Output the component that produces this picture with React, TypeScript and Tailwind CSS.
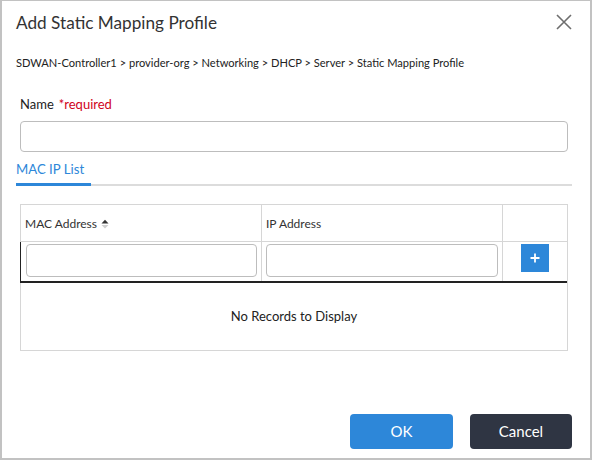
import { useState } from "react";

const FONT = "font-['Lato','Liberation_Sans',sans-serif]";

function SortIcon() {
  return (
    <svg width="8" height="10" viewBox="0 0 8 10" className="ml-[4px] inline-block">
      <path d="M0.5 4.5 L4 0.8 L7.5 4.5 Z" fill="#333" />
      <path d="M0.5 6 L4 9.5 L7.5 6 Z" fill="#cfcfcf" />
    </svg>
  );
}

function CloseIcon() {
  return (
    <svg width="16" height="16" viewBox="0 0 16 16">
      <path d="M1 1 L15 15 M15 1 L1 15" stroke="#6e6e6e" strokeWidth="1.6" fill="none" />
    </svg>
  );
}

export default function App() {
  const [name, setName] = useState("");
  const [mac, setMac] = useState("");
  const [ip, setIp] = useState("");

  return (
    <div
      className={`${FONT} w-[592px] h-[460px] bg-white border-x-2 border-b-2 border-t border-[#c2c2c2] flex flex-col text-[#333]`}
    >
      <div className="flex items-start justify-between pl-[14px] pr-[18px] pt-[12px]">
        <h2 className="text-[17.2px] leading-[20px] text-[#333]">Add Static Mapping Profile</h2>
        <button className="mt-[1px]">
          <CloseIcon />
        </button>
      </div>

      <div className="mt-[23px] pl-[14px] text-[11.1px] leading-[14px] text-[#222]">
        SDWAN-Controller1 &gt; provider-org &gt; Networking &gt; DHCP &gt; Server &gt; Static Mapping Profile
      </div>

      <div className="mt-[26px] pl-[18px] text-[13px] leading-[16px]">
        <span className="text-[#222]">Name</span>
        <span className="ml-[5px] text-[13px] text-[#d0021b]">*required</span>
      </div>
      <input
        value={name}
        onChange={(e) => setName(e.target.value)}
        className="mt-[9px] ml-[18px] w-[548px] h-[31px] rounded-[4px] border border-[#bdbdbd] px-2 text-[13px] outline-none"
      />

      <div className="mt-[9px] ml-[14px] w-[556px] flex border-b-2 border-[#dcdcdc]">
        <div className="mb-[-2px] w-[75px] pb-[6px] border-b-[3px] border-[#2d87d9] text-[13.2px] leading-[16px] text-[#2d87d9]">
          MAC IP List
        </div>
      </div>

      <div className="mt-[18px] ml-[18px] w-[548px] border border-[#d6d6d6]">
        <div className="grid grid-cols-[241px_241px_1fr] h-[37px] border-b border-[#d6d6d6] text-[12px] text-[#333]">
          <div className="flex items-center pt-[2px] pl-[4px] border-r border-[#d6d6d6]">
            MAC Address
            <SortIcon />
          </div>
          <div className="flex items-center pt-[2px] pl-[4px] border-r border-[#d6d6d6]">IP Address</div>
          <div />
        </div>
        <div className="grid grid-cols-[241px_241px_1fr] h-[41px] border-l border-b-2 border-l-[#222] border-b-[#222] -ml-px">
          <div className="pt-[2px] pl-[5px] pr-[4px] border-r border-[#d6d6d6]">
            <input
              value={mac}
              onChange={(e) => setMac(e.target.value)}
              className="w-full h-[33px] rounded-[4px] border border-[#bdbdbd] px-2 text-[13px] outline-none"
            />
          </div>
          <div className="pt-[2px] pl-[4px] pr-[4px] border-r border-[#d6d6d6]">
            <input
              value={ip}
              onChange={(e) => setIp(e.target.value)}
              className="w-full h-[33px] rounded-[4px] border border-[#bdbdbd] px-2 text-[13px] outline-none"
            />
          </div>
          <div className="flex justify-center pt-[2px]">
            <button className="w-[28px] h-[28px] bg-[#2d87d9] flex items-center justify-center">
              <svg width="10" height="10" viewBox="0 0 10 10">
                <path d="M5 0.5 V9.5 M0.5 5 H9.5" stroke="#fff" strokeWidth="1.8" />
              </svg>
            </button>
          </div>
        </div>
        <div className="h-[67px] flex items-center justify-center text-[13px] text-[#222]">
          No Records to Display
        </div>
      </div>

      <div className="mt-auto mb-[9px] flex justify-end gap-[17px] pr-[18px]">
        <button className="w-[103px] h-[35px] rounded-[4px] bg-[#2d87d9] text-white text-[15px]">OK</button>
        <button className="w-[102px] h-[35px] rounded-[4px] bg-[#2f3543] text-white text-[15px]">Cancel</button>
      </div>
    </div>
  );
}
